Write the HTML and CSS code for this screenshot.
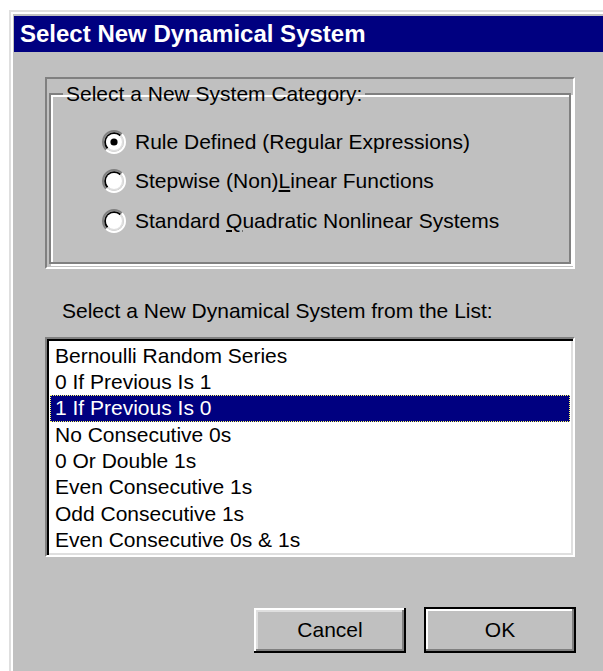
FILE: index.html
```html
<!DOCTYPE html>
<html lang="en">
<head>
<meta charset="utf-8">
<title>Select New Dynamical System</title>
<link rel="stylesheet" href="styles.css">
</head>
<body>
<div class="window">
  <div class="titlebar">Select New Dynamical System</div>
  <div class="client">
    <div class="panel">
      <fieldset class="group">
        <legend class="group-title">Select a New System Category:</legend>
        <div class="radios">
          <label class="radio">
            <svg class="radio-box" width="24" height="24" viewBox="0 0 24 24">
              <path d="M4.22 19.78A11 11 0 0 1 19.78 4.22" fill="none" stroke="#808080" stroke-width="2"/>
              <path d="M19.78 4.22A11 11 0 0 1 4.22 19.78" fill="none" stroke="#ffffff" stroke-width="2"/>
              <path d="M5.64 18.36A9 9 0 0 1 18.36 5.64" fill="none" stroke="#000000" stroke-width="2"/>
              <path d="M18.36 5.64A9 9 0 0 1 5.64 18.36" fill="none" stroke="#dfdfdf" stroke-width="2"/>
              <circle cx="12" cy="12" r="8" fill="#ffffff"/>
              <circle cx="12" cy="12" r="3.6" fill="#000000"/>
            </svg>
            <span>Rule Defined (Regular Expressions)</span>
          </label>
          <label class="radio">
            <svg class="radio-box" width="24" height="24" viewBox="0 0 24 24">
              <path d="M4.22 19.78A11 11 0 0 1 19.78 4.22" fill="none" stroke="#808080" stroke-width="2"/>
              <path d="M19.78 4.22A11 11 0 0 1 4.22 19.78" fill="none" stroke="#ffffff" stroke-width="2"/>
              <path d="M5.64 18.36A9 9 0 0 1 18.36 5.64" fill="none" stroke="#000000" stroke-width="2"/>
              <path d="M18.36 5.64A9 9 0 0 1 5.64 18.36" fill="none" stroke="#dfdfdf" stroke-width="2"/>
              <circle cx="12" cy="12" r="8" fill="#ffffff"/>
            </svg>
            <span>Stepwise (Non)<u>L</u>inear Functions</span>
          </label>
          <label class="radio">
            <svg class="radio-box" width="24" height="24" viewBox="0 0 24 24">
              <path d="M4.22 19.78A11 11 0 0 1 19.78 4.22" fill="none" stroke="#808080" stroke-width="2"/>
              <path d="M19.78 4.22A11 11 0 0 1 4.22 19.78" fill="none" stroke="#ffffff" stroke-width="2"/>
              <path d="M5.64 18.36A9 9 0 0 1 18.36 5.64" fill="none" stroke="#000000" stroke-width="2"/>
              <path d="M18.36 5.64A9 9 0 0 1 5.64 18.36" fill="none" stroke="#dfdfdf" stroke-width="2"/>
              <circle cx="12" cy="12" r="8" fill="#ffffff"/>
            </svg>
            <span>Standard <u>Q</u>uadratic Nonlinear Systems</span>
          </label>
        </div>
      </fieldset>
    </div>

    <div class="list-label">Select a New Dynamical System from the List:</div>

    <ul class="listbox">
      <li>Bernoulli Random Series</li>
      <li>0 If Previous Is 1</li>
      <li class="selected">1 If Previous Is 0</li>
      <li>No Consecutive 0s</li>
      <li>0 Or Double 1s</li>
      <li>Even Consecutive 1s</li>
      <li>Odd Consecutive 1s</li>
      <li>Even Consecutive 0s &amp; 1s</li>
    </ul>

    <div class="buttons">
      <button class="btn" type="button">Cancel</button>
      <button class="btn btn-default" type="button">OK</button>
    </div>
  </div>
</div>
</body>
</html>
```

FILE: styles.css
```css
html, body {
  margin: 0;
  padding: 0;
  background: #ffffff;
  overflow: hidden;
  height: 100%;
}

body {
  font-family: "Liberation Sans", Arial, sans-serif;
  font-size: 21px;
  color: #000000;
}

/* dialog frame, continuing past the right and bottom edges */
.window {
  margin: 10px 0 0 9px;
  width: calc(100% - 9px);
  height: calc(100% - 10px);
  overflow: hidden;
  background: #c0c0c0;
  border-top: 2px solid #dfdfdf;
  border-left: 2px solid #dfdfdf;
  box-shadow: inset 2px 2px 0 #ffffff;
  padding: 4px 0 0 3px;
  box-sizing: border-box;
}

.titlebar {
  height: 36px;
  background: #000080;
  color: #ffffff;
  font-weight: bold;
  font-size: 24px;
  line-height: 36px;
  padding-left: 6px;
  white-space: nowrap;
}

.client {
  padding: 25px 0 0 31px;
  width: 531px;
}

/* sunken frame around the category group */
.panel {
  width: 530px;
  box-sizing: border-box;
  border-style: solid;
  border-width: 2px;
  border-color: #808080 #ffffff #ffffff #808080;
  padding: 3px 2px 3px 2px;
}

.group {
  margin: 0;
  padding: 0 0 21px 12px;
  border: 2px solid #808080;
  box-shadow: inset 2px 2px 0 #ffffff, 2px 2px 0 #ffffff;
  min-width: 0;
}

.group-title {
  padding: 0 3px;
  line-height: 24px;
}

.radios {
  display: flex;
  flex-direction: column;
  padding: 16px 0 0 39px;
}

.radio {
  display: flex;
  align-items: center;
  gap: 9px;
  height: 39.5px;
  white-space: nowrap;
}

.radio-box {
  flex: none;
}

.list-label {
  padding: 30px 0 0 17px;
  line-height: 24px;
  white-space: nowrap;
}

/* sunken white list box */
.listbox {
  list-style: none;
  margin: 14px 0 0 0;
  width: 530px;
  height: 220px;
  box-sizing: border-box;
  background: #ffffff;
  border-style: solid;
  border-width: 2px;
  border-color: #808080 #ffffff #ffffff #808080;
  box-shadow: inset 2px 2px 0 #000000, inset -2px -2px 0 #dfdfdf;
  padding: 4px 2px 0 2px;
  overflow: hidden;
}

.listbox li {
  height: 26.4px;
  line-height: 26.4px;
  padding-left: 5px;
  margin: 0 1px;
  white-space: nowrap;
}

.listbox li.selected {
  background: #000080;
  color: #ffffff;
  outline: 1px dotted #ffff66;
  outline-offset: -1px;
}

.buttons {
  display: flex;
  justify-content: flex-end;
  gap: 18px;
  margin-top: 51px;
  width: 531px;
}

.btn {
  width: 152px;
  height: 45px;
  padding: 0;
  margin: 0;
  border: none;
  background: #c0c0c0;
  font-family: inherit;
  font-size: 21px;
  color: #000000;
  box-shadow:
    inset -2px -2px 0 #000000,
    inset 2px 2px 0 #ffffff,
    inset -4px -4px 0 #808080,
    inset 4px 4px 0 #dfdfdf;
}

.btn-default {
  height: 46px;
  margin-top: -1px;
  border: 2px solid #000000;
  box-shadow:
    inset -2px -2px 0 #808080,
    inset 2px 2px 0 #ffffff;
}
```
